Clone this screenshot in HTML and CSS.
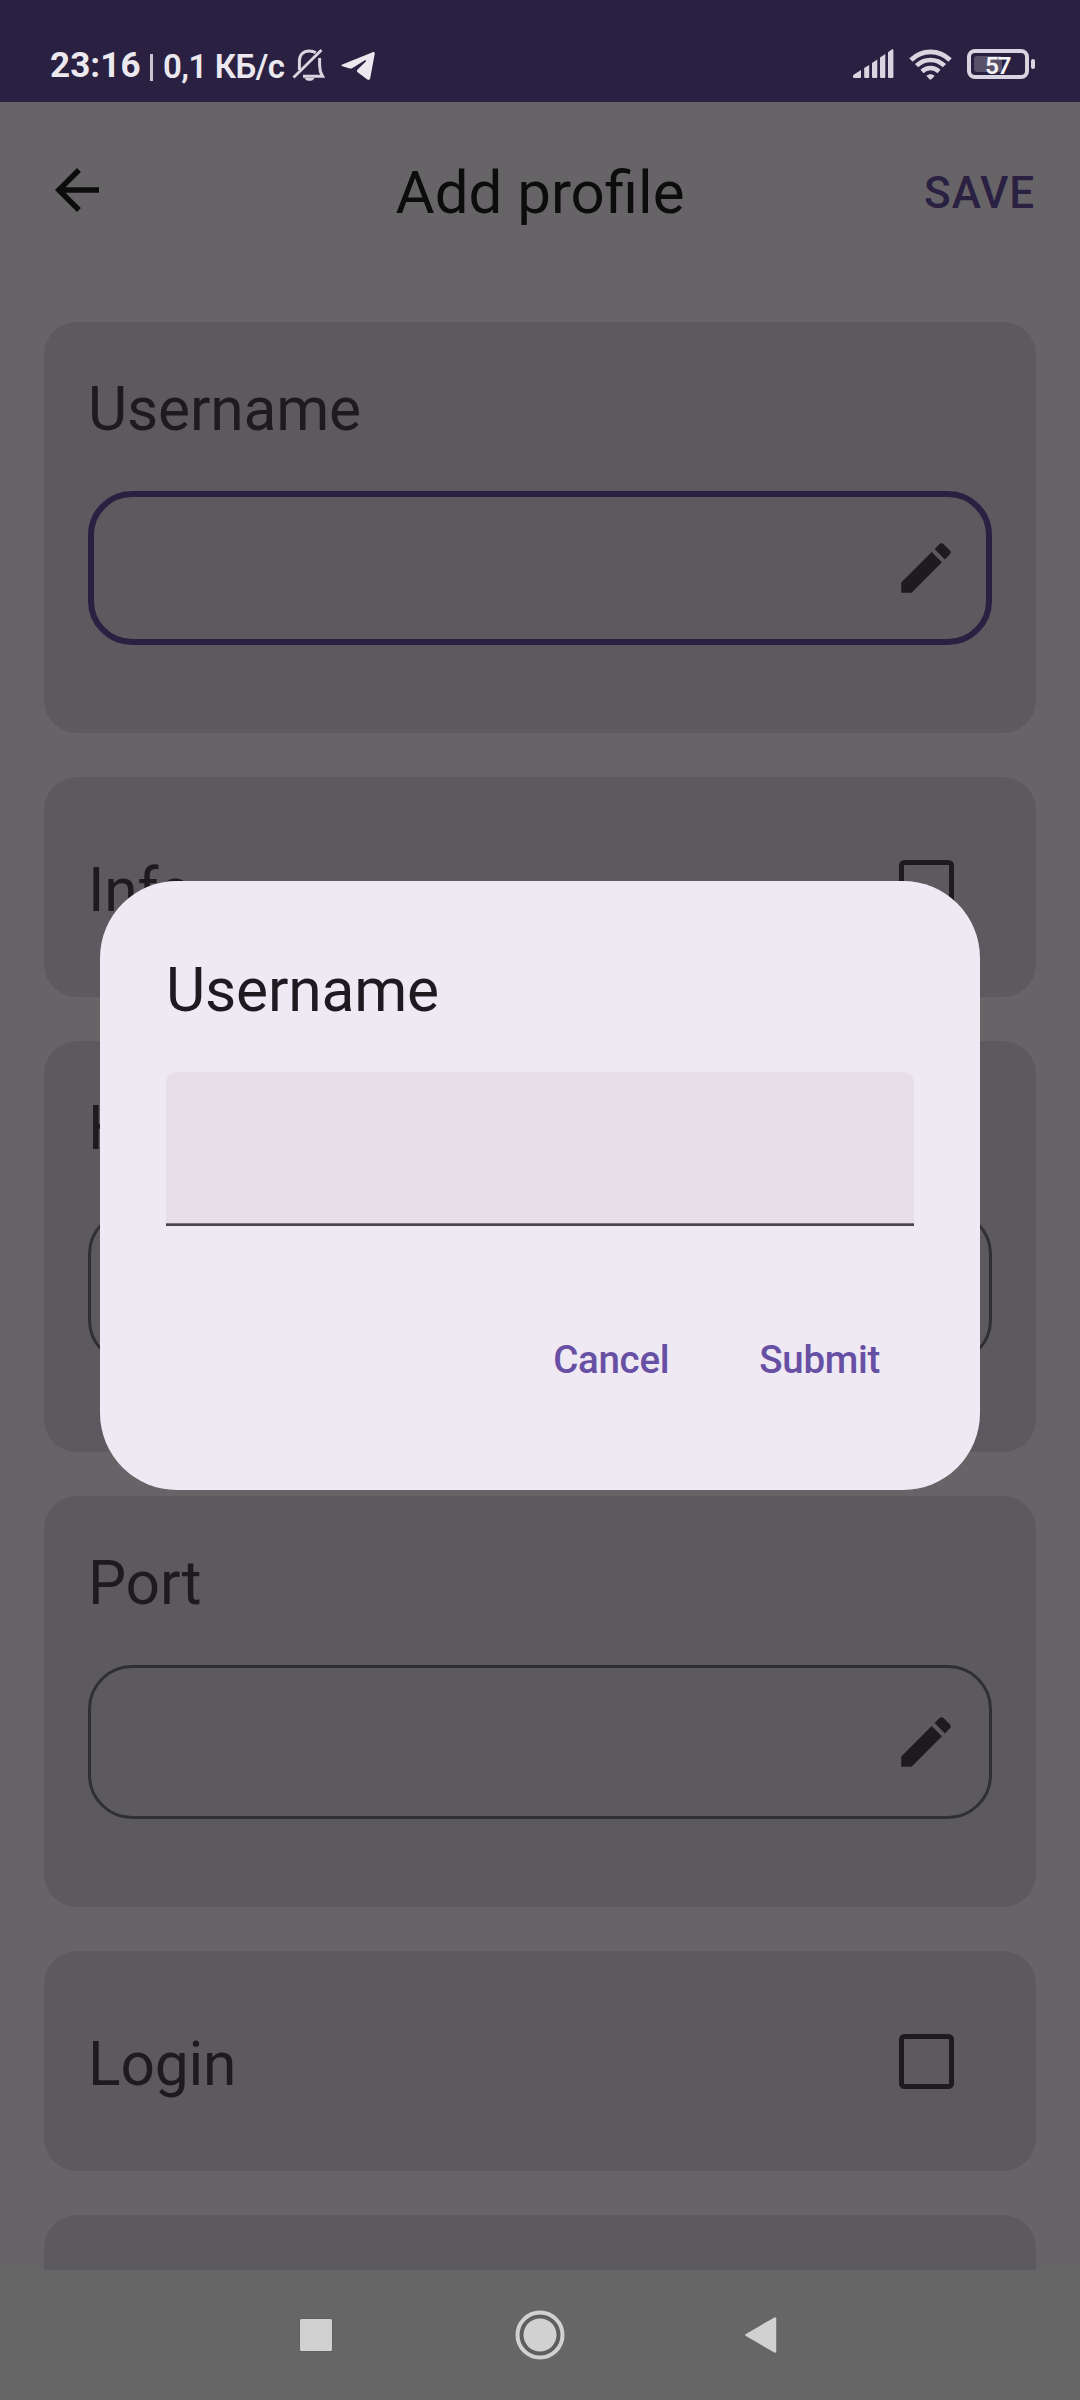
FILE: index.html
```html
<!DOCTYPE html>
<html lang="en">
<head>
<meta charset="utf-8">
<title>Add profile</title>
<link rel="stylesheet" href="styles.css">
</head>
<body>
<div class="screen">
  <div class="status">
    <span class="time">23:16</span>
    <span class="divider"></span>
    <span class="speed">0,1 КБ/с</span>
    <svg class="bell" width="34" height="34" viewBox="0 0 34 34" fill="none" stroke="#d9d5e0" stroke-width="3">
      <path d="M7.400 22V13C7.400 7 11 3 17.500 3C20 3 22 3.600 23.800 4.800M27.600 10V17.500C27.600 23.500 29.500 26.500 30.600 28.300H11"/>
      <path d="M1.500 29.500L29.500 2" stroke-width="2.800"/>
      <path d="M12.500 30H22.500C21.500 32 19.800 32.800 17.500 32.800C15.200 32.800 13.500 32 12.500 30Z" fill="#d9d5e0" stroke="none"/>
    </svg>
    <svg class="plane" width="34" height="30" viewBox="0 0 34 30" fill="#ebe9ef">
      <path d="M1.300 13.600L31.600 1.200C33.200.6 34 1.300 33.700 3L29.300 26.800C28.900 29 27.600 29.500 26 28.300L16.600 21.200C15.600 20.400 15.700 19.400 16.600 18.500L24.800 10.500C25.500 9.600 24.500 8.800 23.500 9.400L11.500 16.900C10.300 17.700 9.200 17.700 8 17.300L1.500 15.200C0 14.700 0 14.100 1.300 13.600Z"/>
    </svg>
    <div class="status-right">
      <svg width="41" height="30" viewBox="0 0 41 30" fill="#d9d5e0">
        <path d="M1 25.500L8 21V28Q8 29 7 29H1Q0 29 0 28V27Q0 26 1 25.500ZM11.200 19L16.200 16V28Q16.200 29 15.200 29H12.200Q11.200 29 11.200 28ZM19 14L24.300 10.500V28Q24.300 29 23.300 29H20Q19 29 19 28ZM27 8.500L32.300 5V28Q32.300 29 31.300 29H28Q27 29 27 28ZM35 3.200L39 .3Q40.400 0 40.400 1V28Q40.400 29 39.400 29H36Q35 29 35 28Z"/>
      </svg>
      <svg class="wifi" width="43" height="31" viewBox="0 0 43 31" fill="none" stroke="#d9d5e0" stroke-width="4.600">
        <path d="M1.900 11C13 .1 30 .1 41.100 11M7.500 16.700C15.500 9 27.500 9 35.500 16.700M13 22.500C18 17.800 25 17.800 30 22.500"/>
        <path d="M17.300 26.800C20 24.600 23 24.600 25.700 26.800L22.500 30.200Q21.500 31 20.500 30.200Z" fill="#d9d5e0" stroke="none"/>
      </svg>
      <div class="battery"><div class="level"></div><span class="percent">57</span></div>
      <div class="nub"></div>
    </div>
  </div>

  <header class="bar">
    <svg class="back" width="66" height="66" viewBox="0 0 24 24" fill="#0c0c0c"><path d="M20 11H7.830l5.590-5.590L12 4l-8 8 8 8 1.410-1.410L7.830 13H20v-2z"/></svg>
    <h1 class="title">Add profile</h1>
    <span class="save">SAVE</span>
  </header>

  <main class="list">
    <section class="card field-card">
      <div class="label">Username</div>
      <div class="field focused"><svg width="66" height="66" viewBox="0 0 24 24"><path d="M3 17.250V21h3.750L17.810 9.940l-3.750-3.750L3 17.250zM20.710 7.040c.39-.39.39-1.020 0-1.410l-2.340-2.340c-.39-.39-1.020-.39-1.410 0l-1.830 1.830 3.750 3.750 1.830-1.830z"/></svg></div>
    </section>
    <section class="card check-card"><div class="label">Info</div><div class="checkbox"></div></section>
    <section class="card field-card">
      <div class="label">Host</div>
      <div class="field"><svg width="66" height="66" viewBox="0 0 24 24"><path d="M3 17.250V21h3.750L17.810 9.940l-3.750-3.750L3 17.250zM20.710 7.040c.39-.39.39-1.020 0-1.410l-2.340-2.340c-.39-.39-1.020-.39-1.410 0l-1.830 1.830 3.750 3.750 1.830-1.830z"/></svg></div>
    </section>
    <section class="card field-card">
      <div class="label">Port</div>
      <div class="field"><svg width="66" height="66" viewBox="0 0 24 24"><path d="M3 17.250V21h3.750L17.810 9.940l-3.750-3.750L3 17.250zM20.710 7.040c.39-.39.39-1.020 0-1.410l-2.340-2.340c-.39-.39-1.020-.39-1.410 0l-1.830 1.830 3.750 3.750 1.830-1.830z"/></svg></div>
    </section>
    <section class="card check-card"><div class="label">Login</div><div class="checkbox"></div></section>
    <section class="card check-card"></section>
  </main>

  <nav class="nav">
    <svg width="34" height="34" viewBox="0 0 34 34"><rect x=".5" y=".5" width="33" height="33" rx="2" fill="#5a5a5a"/><rect x="1" y="1" width="32" height="32" rx="1.500" fill="#d1d1d1"/></svg>
    <svg class="home" width="50" height="50" viewBox="0 0 50 50"><circle cx="25" cy="25" r="20.500" fill="#5e5e5e"/><circle cx="25" cy="25" r="22.500" fill="none" stroke="#d1d1d1" stroke-width="4"/><circle cx="25" cy="25" r="16.500" fill="#d1d1d1"/></svg>
    <svg width="34" height="38" viewBox="0 0 34 38"><path d="M2.500 19L31 2.500V35.500Z" fill="#d1d1d1" stroke="#d1d1d1" stroke-width="2.500" stroke-linejoin="round"/></svg>
  </nav>
</div>

<div class="dialog">
  <h2 class="dialog-title">Username</h2>
  <div class="input"></div>
  <div class="actions"><span class="cancel">Cancel</span><span>Submit</span></div>
</div>
</body>
</html>
```

FILE: styles.css
```css
* { box-sizing: border-box; margin: 0; }
body {
  width: 1080px;
  height: 2400px;
  overflow: hidden;
  font-family: Roboto, sans-serif;
  color: #1d1b20;
  background: #676467;
}
svg { display: block; flex: none; }
.screen { height: 2400px; display: flex; flex-direction: column; }

/* Status bar */
.status {
  flex: none;
  height: 102px;
  display: flex;
  align-items: flex-start;
  padding: 47px 45px 0 50px;
  background: #2a2041;
  color: #ebe9ef;
  line-height: 37px;
  white-space: nowrap;
}
.time { width: 100px; font-size: 35px; font-weight: 700; letter-spacing: 0.1px; }
.divider { width: 3px; height: 27px; margin-top: 7px; background: #c9c5d0; }
.speed { width: 139px; padding: 1px 0 0 10px; font-size: 33px; font-weight: 600; letter-spacing: -0.5px; }
.bell { margin-top: 1px; }
.plane { margin: 4px 0 0 15px; }
.status-right { display: flex; align-items: flex-start; margin-left: auto; padding-top: 2px; }
.wifi { margin-left: 15px; }
.battery {
  position: relative;
  width: 62px;
  height: 30px;
  margin-left: 15px;
  border: 4px solid #d9d5e0;
  border-radius: 8px;
}
.level { width: 28px; height: 16px; margin: 3px; border-radius: 3px; background: #595169; }
.percent {
  position: absolute;
  left: 14px;
  top: -1px;
  font-size: 24.5px;
  font-weight: 600;
  line-height: 27px;
  letter-spacing: -1.4px;
  color: #f5f3f8;
}
.nub { width: 4px; height: 10px; margin: 10px 0 0 2px; border-radius: 2px; background: #d9d5e0; }

/* App bar */
.bar {
  flex: none;
  height: 176px;
  display: grid;
  grid-template-columns: 200px 1fr 200px;
  align-items: center;
  padding: 0 44px;
}
.title {
  color: #0c0c0c;
  font-size: 60px;
  font-weight: 400;
  line-height: 77px;
  text-align: center;
  padding-top: 5px;
}
.save {
  color: #2a2042;
  font-size: 44px;
  font-weight: 500;
  line-height: 52px;
  letter-spacing: 0.9px;
  text-align: right;
  padding: 5px 1px 0 0;
}

/* Cards */
.list {
  flex: 1;
  min-height: 0;
  overflow: hidden;
  display: flex;
  flex-direction: column;
  gap: 44px;
  padding: 44px 44px 0;
}
.card { flex: none; border-radius: 33px; background: #5c5a5f; }
.field-card { height: 411px; padding: 49px 44px 0; }
.check-card {
  height: 220px;
  display: flex;
  align-items: center;
  justify-content: space-between;
  padding: 0 82px 0 44px;
}
.label { font-size: 60.5px; line-height: 77px; letter-spacing: -0.2px; }
.check-card .label { padding-top: 6px; }
.field {
  height: 154px;
  margin-top: 43px;
  padding-right: 30px;
  display: flex;
  align-items: center;
  justify-content: flex-end;
  border: 3px solid #303034;
  border-radius: 44px;
  fill: #1d1b20;
}
.focused { border: 6px solid #2a2041; padding-right: 27px; }
.checkbox { width: 55px; height: 55px; border: 5px solid #1d1b20; border-radius: 5.5px; }

/* Navigation bar */
.nav {
  flex: none;
  height: 130px;
  display: flex;
  align-items: center;
  justify-content: space-between;
  padding: 0 302px 0 299px;
  background: #666666;
}
.home { margin-left: 3px; }

/* Dialog over the page */
.dialog {
  position: absolute;
  left: 100px;
  top: 881px;
  width: 880px;
  height: 609px;
  padding: 71px 66px 0;
  border-radius: 77px;
  background: #efe9f4;
}
.dialog-title { font-size: 60.5px; font-weight: 400; line-height: 77px; letter-spacing: -0.2px; }
.input {
  height: 154px;
  margin-top: 43px;
  border-radius: 11px 11px 0 0;
  background: linear-gradient(#79747e 0 1px, #49454f 1px) bottom / 100% 3px no-repeat #e6dfea;
}
.actions {
  display: flex;
  justify-content: flex-end;
  gap: 90px;
  margin-top: 106px;
  padding-right: 34px;
  color: #6750a4;
  font-size: 38.5px;
  font-weight: 500;
  line-height: 55px;
  letter-spacing: -0.3px;
}
```
